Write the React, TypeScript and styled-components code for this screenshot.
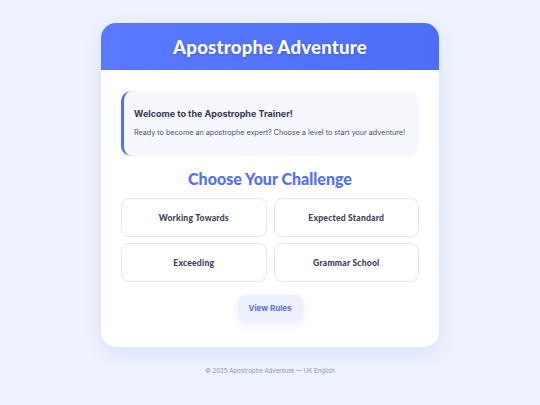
import React from "react";
import styled, { createGlobalStyle } from "styled-components";

const Global = createGlobalStyle`
  html, body { margin: 0; padding: 0; }
  body {
    background: #eef2fe;
    font-family: Inter, "Noto Sans", sans-serif;
    width: 540px;
    height: 405px;
    overflow: hidden;
  }
`;

const Page = styled.div`
  display: flex;
  flex-direction: column;
  align-items: center;
  padding-top: 23px;
`;

const Card = styled.main`
  width: 338px;
  background: #ffffff;
  border-radius: 15px;
  overflow: hidden;
  box-shadow: 0 6px 18px rgba(80, 100, 200, 0.12);
`;

const Header = styled.header`
  height: 47px;
  display: flex;
  align-items: center;
  justify-content: center;
  background: linear-gradient(90deg, #5a79ff 0%, #4d6ef9 100%);
`;

const Title = styled.h1`
  margin: 0;
  color: #ffffff;
  font-family: Lato, "Noto Sans", sans-serif;
  font-weight: 900;
  font-size: 18.6px;
  letter-spacing: 0.2px;
  text-shadow: 0 1px 3px rgba(0, 0, 0, 0.18);
`;

const Body = styled.div`
  padding: 21px 20px 26px;
  display: flex;
  flex-direction: column;
  align-items: stretch;
`;

const Welcome = styled.section`
  background: #f7f8fe;
  border-left: 3px solid #5270f2;
  border-radius: 10px;
  padding: 17px 8px 16px 10px;
  height: 65px;
  box-sizing: border-box;
`;

const WelcomeTitle = styled.h3`
  margin: 0 0 9px;
  font-size: 9px;
  font-weight: 700;
  color: #34384f;
`;

const WelcomeText = styled.p`
  margin: 0;
  font-size: 7.2px;
  white-space: nowrap;
  color: #4a4f66;
`;

const Heading = styled.h2`
  margin: 12px 0 8px;
  text-align: center;
  font-family: Lato, "Noto Sans", sans-serif;
  font-weight: 900;
  font-size: 16px;
  line-height: 22px;
  color: #5470f4;
`;

const Grid = styled.div`
  display: grid;
  grid-template-columns: 1fr 1fr;
  gap: 6px 7px;
`;

const Level = styled.button`
  height: 39px;
  background: #ffffff;
  border: 1px solid #e4e7f4;
  border-radius: 8px;
  font-family: Lato, "Noto Sans", sans-serif;
  font-weight: 900;
  font-size: 8.6px;
  color: #3b3f58;
  letter-spacing: 0.2px;
  cursor: pointer;
`;

const RulesRow = styled.div`
  display: flex;
  justify-content: center;
  margin-top: 13px;
`;

const RulesButton = styled.button`
  width: 65px;
  height: 26px;
  border: none;
  border-radius: 7px;
  background: #edf0fe;
  color: #5a6ff0;
  font-family: Inter, "Noto Sans", sans-serif;
  font-weight: 700;
  font-size: 8px;
  box-shadow: 0 3px 8px rgba(90, 110, 240, 0.12);
  cursor: pointer;
`;

const Footer = styled.footer`
  margin-top: 20px;
  font-size: 6.1px;
  color: #8c92b6;
  text-align: center;
`;

const levels = ["Working Towards", "Expected Standard", "Exceeding", "Grammar School"];

export default function App() {
  return (
    <>
      <Global />
      <Page>
        <Card>
          <Header>
            <Title>Apostrophe Adventure</Title>
          </Header>
          <Body>
            <Welcome>
              <WelcomeTitle>Welcome to the Apostrophe Trainer!</WelcomeTitle>
              <WelcomeText>
                Ready to become an apostrophe expert? Choose a level to start your adventure!
              </WelcomeText>
            </Welcome>
            <Heading>Choose Your Challenge</Heading>
            <Grid>
              {levels.map((l) => (
                <Level key={l}>{l}</Level>
              ))}
            </Grid>
            <RulesRow>
              <RulesButton>View Rules</RulesButton>
            </RulesRow>
          </Body>
        </Card>
        <Footer>© 2025 Apostrophe Adventure — UK English</Footer>
      </Page>
    </>
  );
}
